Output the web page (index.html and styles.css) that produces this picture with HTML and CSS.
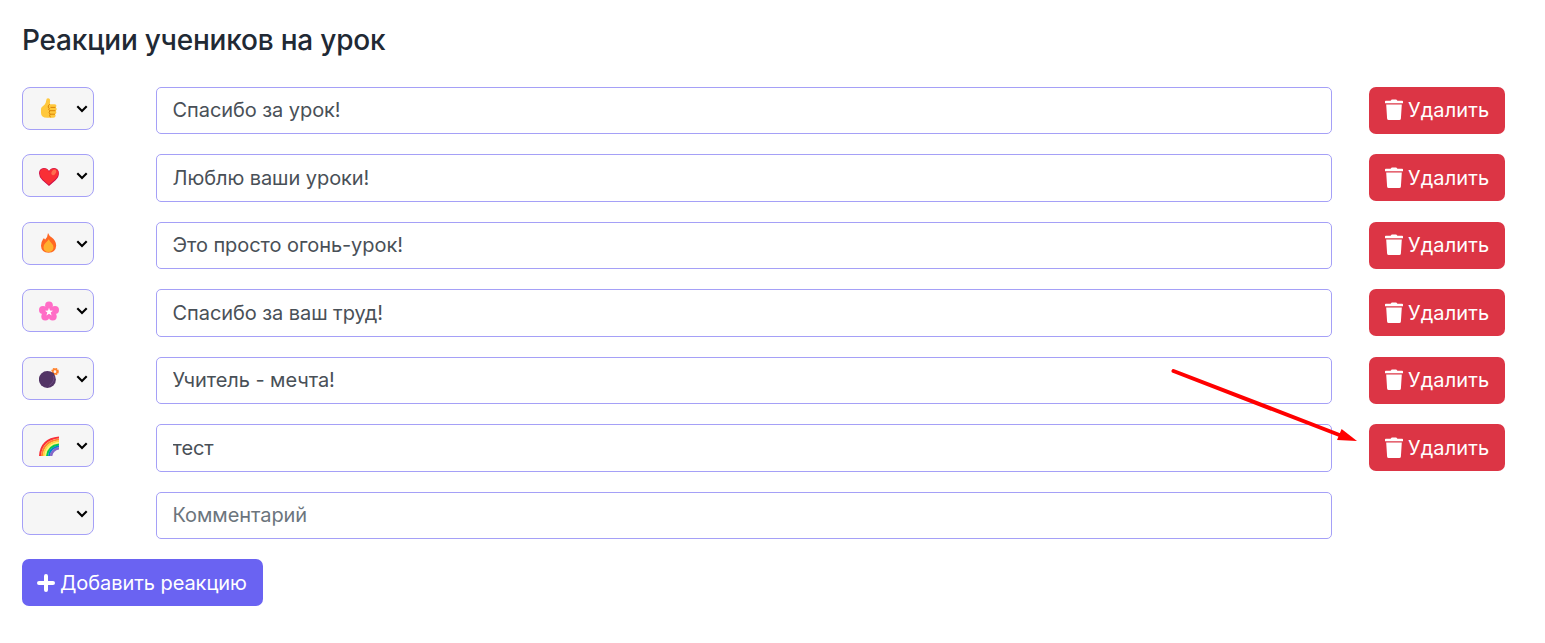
FILE: index.html
```html
<!DOCTYPE html>
<html lang="ru">
<head>
  <meta charset="UTF-8">
  <meta name="viewport" content="width=device-width, initial-scale=1">
  <title>Реакции учеников на урок</title>
  <link rel="stylesheet" href="styles.css">
</head>
<body>

<svg class="sprite" width="0" height="0">
  <symbol id="chevron" viewBox="0 0 12 8">
    <path d="M1.3 1.3 L6 6 L10.7 1.3" fill="none" stroke="#000" stroke-width="2.1"/>
  </symbol>
  <symbol id="trash" viewBox="0 0 18 22">
    <path d="M6 1.2 Q6.3 .5 7 .5 H11 Q11.7 .5 12 1.2 L12.4 1.8 H17.2 Q18 1.8 18 2.6 V4.2 H0 V2.6 Q0 1.8 .8 1.8 H5.6 Z M1.2 5.4 H16.8 L15.9 19.5 Q15.8 21 14.3 21 H3.7 Q2.2 21 2.1 19.5 Z" fill="#fff"/>
  </symbol>
</svg>

<main class="page">
  <h2>Реакции учеников на урок</h2>

  <form class="reactions">
    <div class="row">
      <div class="emoji-select">
        <svg class="emoji" viewBox="0 0 20 20">
          <path d="M2 11 Q2 9.5 3.2 8.8 L5.5 6.8 Q7 5 7.2 2.5 Q7.3 .2 9 .2 Q11.3 .3 11.1 3.2 L10.8 6.2 H15.8 Q17.5 6.3 17.4 7.7 Q17.4 9 16.5 9.4 Q18 10 17.7 11.3 Q17.5 12.5 16.5 12.7 Q17.7 13.5 17.3 14.8 Q17 16 16 16.2 Q17 17.2 16.4 18.4 Q15.8 19.8 14 19.8 H8 Q2 19.6 2 15 Z" fill="#ffc83d"/>
          <path d="M10.8 6.2 Q9 7.2 9.2 9 Q9.3 10 10.3 10.3 M16.5 9.4 H11.5 M16.5 12.7 H11 M16 16.2 H11 M10.3 10.3 Q9 12 10.8 12.7 Q9.4 14.6 11 16.2 Q10 17.8 11.5 19.3" fill="none" stroke="#d67d00" stroke-width=".9"/>
        </svg>
        <svg class="chevron"><use href="#chevron"/></svg>
      </div>
      <input type="text" value="Спасибо за урок!">
      <button type="button" class="btn btn-danger"><svg class="trash"><use href="#trash"/></svg>Удалить</button>
    </div>

    <div class="row">
      <div class="emoji-select">
        <svg class="emoji" viewBox="0 0 20 20">
          <path d="M10 20 L3.4 14.2 Q0 11 0 7.2 Q.2 2.3 4.9 2 Q8.3 2 10 4.9 Q11.7 2 15.1 2 Q19.7 2.3 19.9 7.2 Q20 11 16.6 14.2 Z" fill="#ca0b4a"/>
          <path d="M9.8 18.8 L3.8 13.6 Q.8 10.8 .7 7.2 Q1 3 5 2.6 Q8.4 2.7 10 5.8 Q11.7 2.4 15.3 2.4 Q19.4 2.8 19.5 7.2 Q19.4 10.4 16.6 13 Z" fill="#f92f35"/>
          <ellipse cx="14.8" cy="6.3" rx="2.1" ry="3" fill="#ff6d4e" transform="rotate(30 14.8 6.3)"/>
        </svg>
        <svg class="chevron"><use href="#chevron"/></svg>
      </div>
      <input type="text" value="Люблю ваши уроки!">
      <button type="button" class="btn btn-danger"><svg class="trash"><use href="#trash"/></svg>Удалить</button>
    </div>

    <div class="row">
      <div class="emoji-select">
        <svg class="emoji" viewBox="0 0 20 20">
          <path d="M9 0 Q10.2 3 12.5 4.2 Q17.2 7.8 17.2 12.5 Q16.8 19.5 9.6 19.8 Q2.2 19.5 2 12.8 Q2 9 4 6.3 L5 5 Q5.3 6.3 6.2 6.6 Q8.7 4 9 0 Z" fill="#ff6723"/>
          <path d="M9.8 6.3 Q10.6 8.5 12.6 10.2 Q14.6 12 14.5 14.5 Q14 18.8 9.5 19 Q4.8 18.8 4.5 14.5 Q4.4 12 6.4 10 Q8.7 8 9.8 6.3 Z" fill="#ffb02e"/>
        </svg>
        <svg class="chevron"><use href="#chevron"/></svg>
      </div>
      <input type="text" value="Это просто огонь-урок!">
      <button type="button" class="btn btn-danger"><svg class="trash"><use href="#trash"/></svg>Удалить</button>
    </div>

    <div class="row">
      <div class="emoji-select">
        <svg class="emoji" viewBox="0 0 20 20">
          <g fill="#ff6dc6">
            <circle cx="10" cy="4.4" r="3.9"/>
            <circle cx="16" cy="9" r="4"/>
            <circle cx="13.7" cy="15.6" r="4"/>
            <circle cx="6.3" cy="15.6" r="4"/>
            <circle cx="4" cy="9" r="4"/>
            <circle cx="10" cy="11" r="5.4"/>
          </g>
          <path d="M10 6.8 L11 9.6 L14 9.7 L11.7 11.5 L12.6 14.5 L10 12.8 L7.4 14.5 L8.3 11.5 L6 9.7 L9 9.6 Z" fill="#fff"/>
        </svg>
        <svg class="chevron"><use href="#chevron"/></svg>
      </div>
      <input type="text" value="Спасибо за ваш труд!">
      <button type="button" class="btn btn-danger"><svg class="trash"><use href="#trash"/></svg>Удалить</button>
    </div>

    <div class="row">
      <div class="emoji-select">
        <svg class="emoji" viewBox="0 0 20 20">
          <circle cx="16" cy="3.6" r="2.7" fill="none" stroke="#ff822d" stroke-width="2.2" stroke-dasharray="1.55 .57"/>
          <circle cx="16" cy="3.6" r="2.2" fill="none" stroke="#ff822d" stroke-width="1.4"/>
          <path d="M12 5 L14 4.4 L15.2 6 L14.8 8 Z" fill="#433b6b"/>
          <circle cx="8.4" cy="11.4" r="8.5" fill="#533566"/>
          <path d="M14.6 8 Q16 13.5 10.3 17.4" fill="none" stroke="#6d4a83" stroke-width="1"/>
        </svg>
        <svg class="chevron"><use href="#chevron"/></svg>
      </div>
      <input type="text" value="Учитель - мечта!">
      <button type="button" class="btn btn-danger"><svg class="trash"><use href="#trash"/></svg>Удалить</button>
    </div>

    <div class="row">
      <div class="emoji-select">
        <svg class="emoji" viewBox="0 0 20 20">
          <g fill="none" stroke-width="2">
            <path d="M1 20 Q2 3 20 1.4" stroke="#f92f38"/>
            <path d="M2.9 20 Q4 5 20 3.4" stroke="#ff822d"/>
            <path d="M4.8 20 Q6 7 20 5.3" stroke="#fcd53f"/>
            <path d="M6.4 20 Q7.6 8.6 20 7" stroke="#fff478"/>
            <path d="M8 20 Q9 9.8 20 8.4" stroke="#00c94f"/>
            <path d="M10 20 Q11 11.6 20 10.3" stroke="#0084ce"/>
            <path d="M12 20 Q13 13.5 20 12.2" stroke="#8467c9" stroke-width="2.6"/>
          </g>
        </svg>
        <svg class="chevron"><use href="#chevron"/></svg>
      </div>
      <input type="text" value="тест">
      <button type="button" class="btn btn-danger"><svg class="trash"><use href="#trash"/></svg>Удалить</button>
    </div>

    <div class="row">
      <div class="emoji-select">
        <svg class="chevron"><use href="#chevron"/></svg>
      </div>
      <input type="text" placeholder="Комментарий">
    </div>

    <button type="button" class="btn btn-primary">
      <svg class="plus" viewBox="0 0 18 18"><path d="M9 2 V16 M2 9 H16" stroke="#fff" stroke-width="4" stroke-linecap="round"/></svg>Добавить реакцию
    </button>
  </form>

  <!-- pointer to the last delete button -->
  <svg class="arrow" viewBox="0 0 190 76">
    <path d="M3.5 4 L172 69" stroke="#f00" stroke-width="4" stroke-linecap="round"/>
    <path d="M187 74 L167 73 L171.6 62 Z" fill="#f00"/>
  </svg>
</main>

</body>
</html>
```

FILE: styles.css
```css
* {
  box-sizing: border-box;
}

body {
  margin: 0;
  background-color: #fff;
  font-family: Inter, 'Liberation Sans', sans-serif;
  font-size: 20px;
  color: #212529;
}

.sprite {
  display: block;
}

.page {
  position: relative;
  height: 643px;
  padding: 23px 40px 0 22px;
  overflow: hidden;
}

h2 {
  margin: 0 0 29.8px;
  font-size: 28px;
  font-weight: 500;
  line-height: 34px;
  letter-spacing: -0.2px;
  color: #212934;
}

.reactions {
  display: flex;
  flex-direction: column;
  align-items: flex-start;
  gap: 20px;
}

.row {
  display: grid;
  grid-template-columns: 134px 1213px 136px;
  height: 47.5px;
}

.emoji-select {
  display: flex;
  align-items: center;
  width: 72px;
  height: 43px;
  padding: 0 5px 0 15.7px;
  border: 1px solid #a5a0f7;
  border-radius: 8px;
  background-color: #f6f6f6;
}

.emoji {
  width: 20px;
  height: 20px;
}

.chevron {
  width: 12px;
  height: 8px;
  margin-top: 1px;
  margin-left: auto;
}

input {
  width: 1176px;
  height: 47.5px;
  padding: 0 15.5px 0.4px;
  border: 1px solid #a5a0f7;
  border-radius: 5px;
  background-color: #fff;
  font-family: inherit;
  font-size: 20px;
  font-weight: 400;
  letter-spacing: -0.07px;
  color: #495057;
}

input::placeholder {
  color: #6c757d;
  opacity: 1;
}

.btn {
  display: flex;
  align-items: center;
  height: 47px;
  padding: 0 15px;
  border: none;
  border-radius: 7px;
  font-family: inherit;
  font-size: 20px;
  font-weight: 400;
  color: #fff;
  white-space: nowrap;
  cursor: pointer;
}

.btn-danger {
  width: 136px;
  padding-left: 16px;
  letter-spacing: 0.1px;
  background-color: #dc3545;
}

.btn-primary {
  width: 241px;
  letter-spacing: -0.06px;
  background-color: #6a63f2;
}

.trash {
  flex: none;
  width: 18px;
  height: 22px;
  margin-right: 5px;
}

.plus {
  flex: none;
  width: 18px;
  height: 18px;
  margin-right: 5px;
}

.arrow {
  position: absolute;
  top: 367px;
  left: 1170px;
  width: 190px;
  height: 76px;
  fill: none;
}
```
